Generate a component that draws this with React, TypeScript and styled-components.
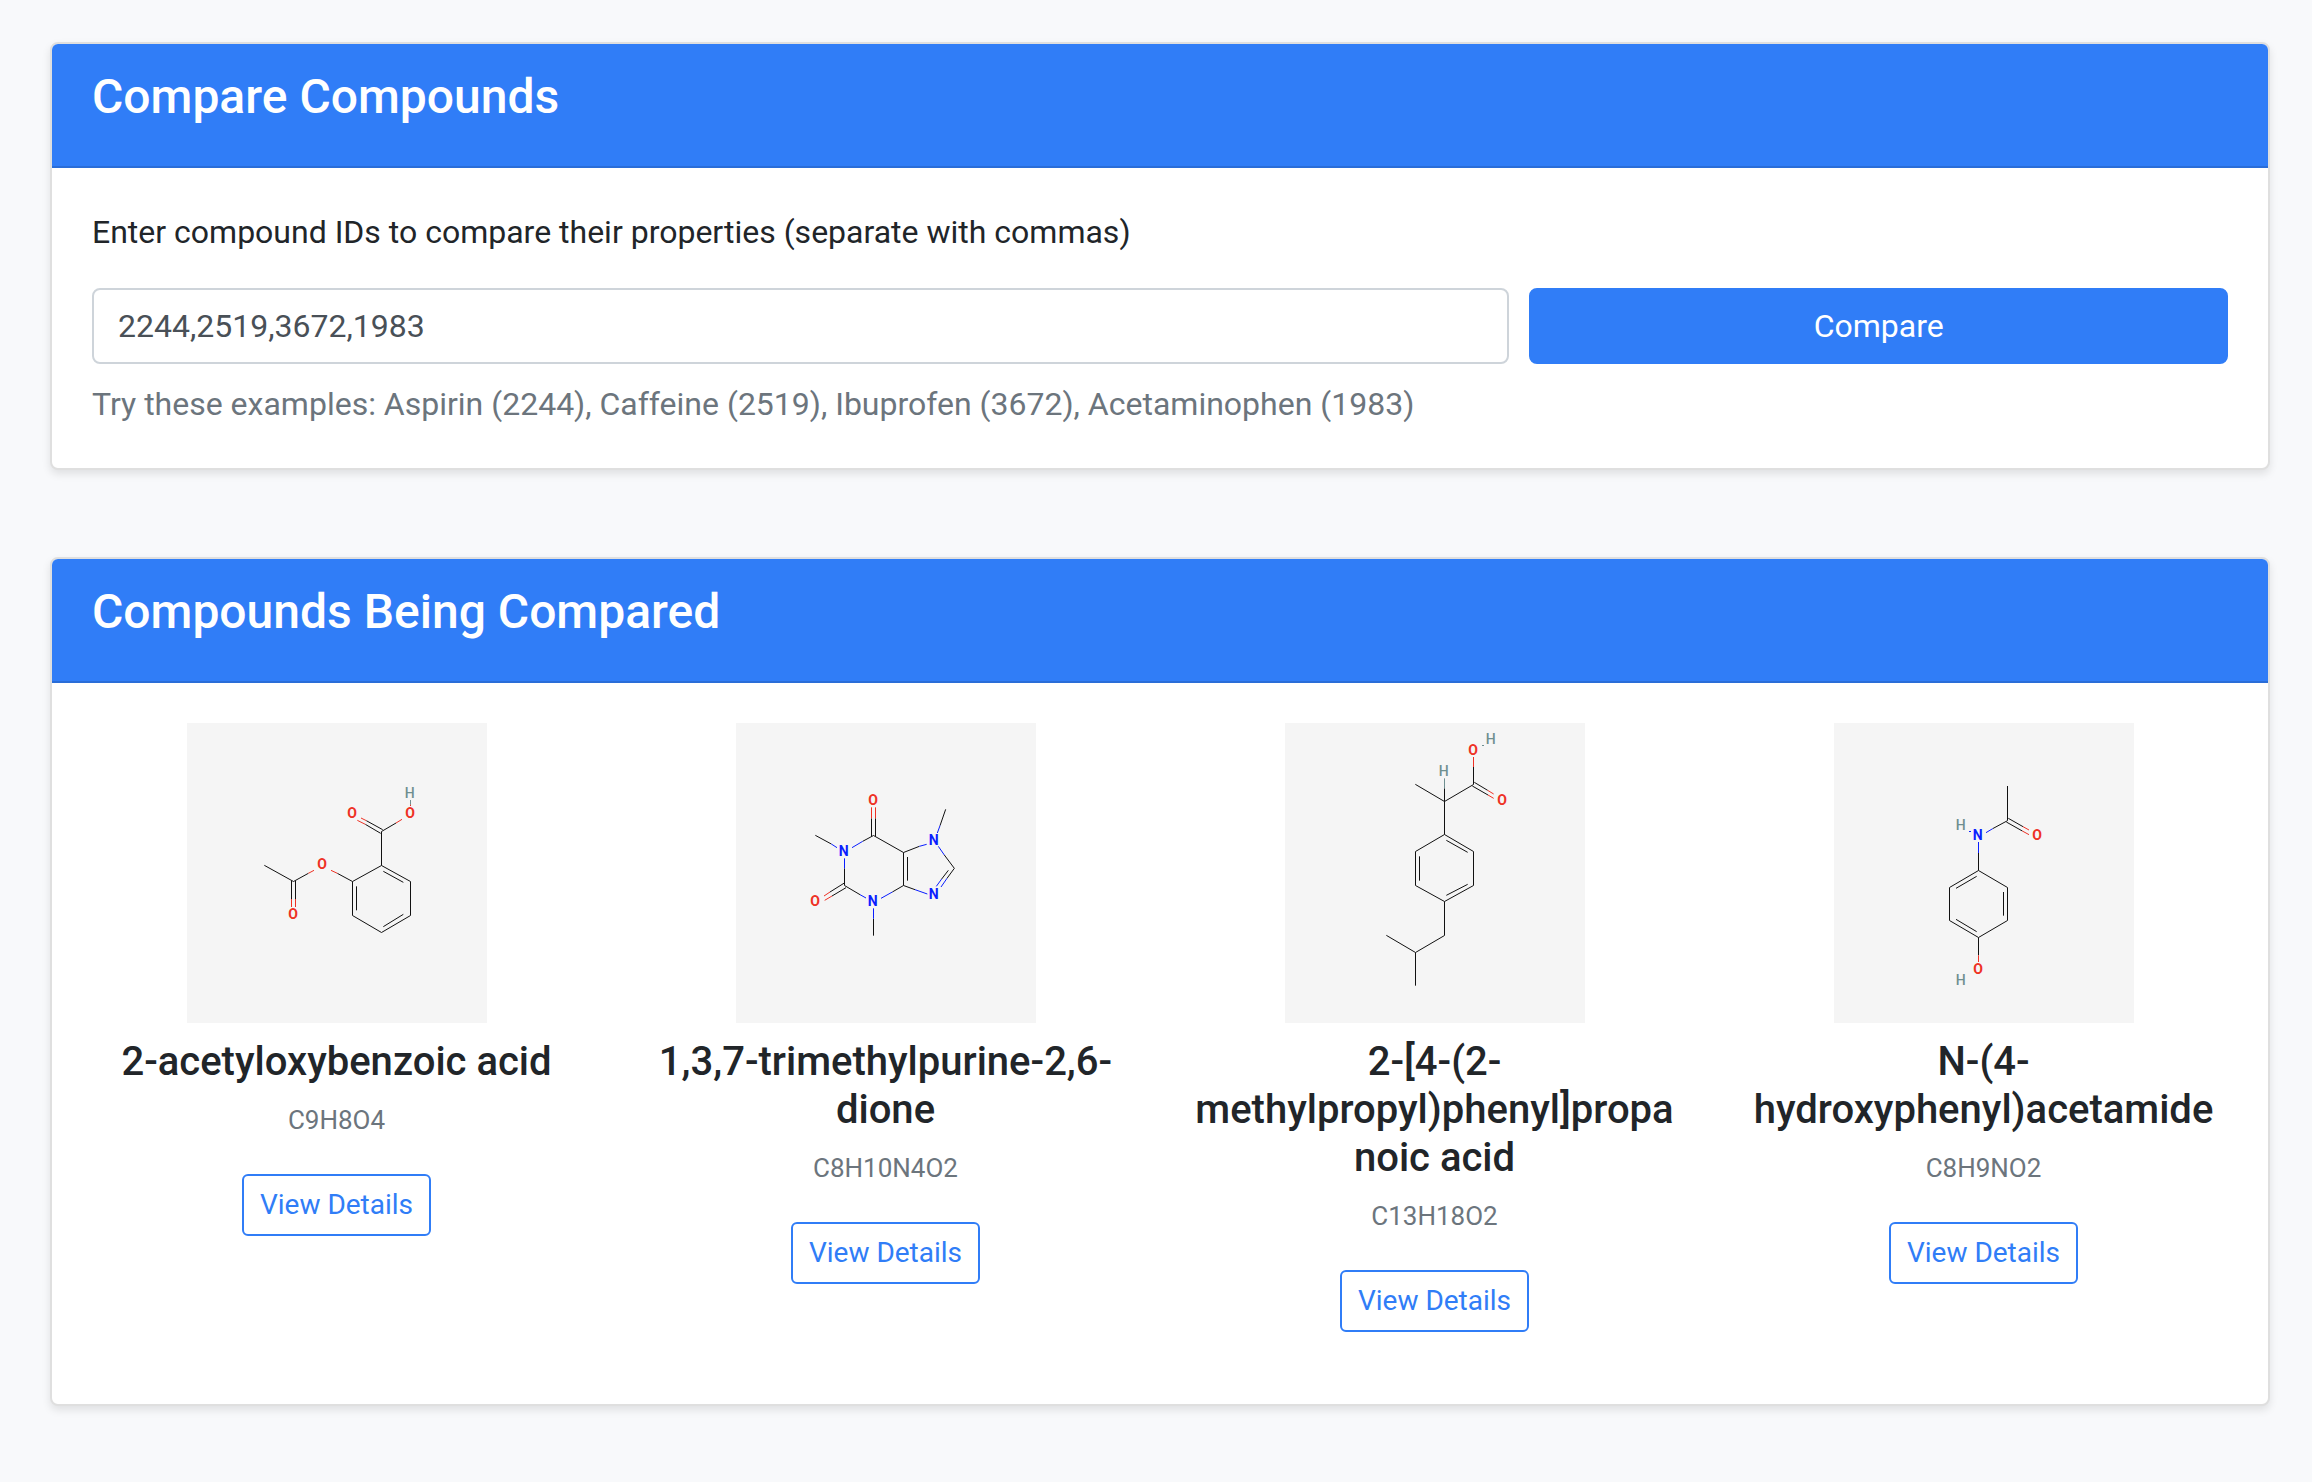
import React, { useState } from "react";
import styled, { createGlobalStyle } from "styled-components";

const color = {
  page: "#f8f9fb",
  primary: "#307df7",
  text: "#212529",
  muted: "#6c757d",
  input: "#495057",
  inputBorder: "#ced4da",
  cardBorder: "#dfdfdf",
  depiction: "#f5f5f5",
};

const GlobalStyle = createGlobalStyle`
  *, *::before, *::after { box-sizing: border-box; }
  body {
    margin: 0;
    background: ${color.page};
    color: ${color.text};
    font-family: Roboto, "Liberation Sans", sans-serif;
    font-size: 32px;
    line-height: 48px;
  }
`;

const Page = styled.main`
  display: flex;
  flex-direction: column;
  gap: 87px;
  padding: 42px 42px 76px 50px;
`;

const Card = styled.section`
  background: #fff;
  border: 2px solid ${color.cardBorder};
  border-radius: 8px;
  box-shadow: 0 4px 8px rgba(0, 0, 0, 0.1);
`;

const CardHeader = styled.header`
  padding: 24px 40px 40px;
  background: ${color.primary};
  border-bottom: 2px solid rgba(0, 0, 0, 0.125);
  border-radius: 6px 6px 0 0;
`;

const CardTitle = styled.h2`
  margin: 0;
  color: #fff;
  font-size: 48px;
  font-weight: 500;
  line-height: 58px;
`;

const CardBody = styled.div`
  padding: 40px;
`;

const FieldLabel = styled.label`
  display: block;
  margin-bottom: 32px;
`;

const FormRow = styled.div`
  display: grid;
  grid-template-columns: repeat(12, minmax(0, 1fr));
  column-gap: 20px;
`;

const IdInput = styled.input`
  grid-column: span 8;
  height: 76px;
  padding: 12px 24px;
  border: 2px solid ${color.inputBorder};
  border-radius: 8px;
  background: #fff;
  color: ${color.input};
  font: inherit;
`;

const CompareButton = styled.button`
  grid-column: span 4;
  height: 76px;
  padding: 12px 24px;
  border: 2px solid ${color.primary};
  border-radius: 8px;
  background: ${color.primary};
  color: #fff;
  font: inherit;
  cursor: pointer;
`;

const HelpText = styled.p`
  margin: 16px 0 0;
  color: ${color.muted};
`;

const CompoundGrid = styled.div`
  display: grid;
  grid-template-columns: repeat(4, minmax(0, 1fr));
  column-gap: 60px;
`;

const Compound = styled.article`
  display: flex;
  flex-direction: column;
  align-items: center;
  padding-bottom: 32px;
  text-align: center;
`;

const Depiction = styled.svg`
  width: 300px;
  height: 300px;
  background: ${color.depiction};
`;

const AtomLabel = styled.text<{ $light?: boolean }>`
  font-family: Roboto, sans-serif;
  font-size: 42px;
  font-weight: ${(p) => (p.$light ? 500 : 700)};
  text-anchor: middle;
`;

const CompoundName = styled.h3`
  align-self: stretch;
  margin: 15px 0 8px;
  font-size: 40px;
  font-weight: 500;
  line-height: 48px;
  overflow-wrap: break-word;
`;

const FormulaLine = styled.p`
  height: 48px;
  margin: 0 0 32px;
`;

const Formula = styled.small`
  color: ${color.muted};
  font-size: 26px;
`;

const DetailsLink = styled.a`
  padding: 8px 16px;
  border: 2px solid ${color.primary};
  border-radius: 6px;
  color: ${color.primary};
  font-size: 28px;
  line-height: 42px;
  text-decoration: none;
`;

type Element = "C" | "O" | "N" | "H";

const elementColor: Record<Element, string> = {
  C: "#111111",
  O: "#ee3124",
  N: "#0a1eff",
  H: "#6f8f90",
};

interface CompoundData {
  id: number;
  name: string;
  formula: string;
  viewBox: string;
  bonds: [Element, string][];
  atoms: [Element, number, number][];
}

// Bond halves are grouped by the element whose colour they take.
const compounds: CompoundData[] = [
  {
    id: 2244,
    name: "2-acetyloxybenzoic acid",
    formula: "C9H8O4",
    viewBox: "21 24 900 900",
    bonds: [
      [
        "C",
        "M604.5 451.5L691.5 499.5V601.5L604.5 652.5L517.5 601.5V499.5Z M610 469L670 502 M529.5 514V586 M610 635L670 598 M604.5 451.5V349.5L648 324 M608 344L559 317 M602 355L556 328 M517.5 499.5L472 475 M253 451L340.5 499.5L385 475 M334.5 498V552 M346.5 498V552",
      ],
      [
        "O",
        "M648 324L666 313 M559 317L543 309 M556 328L532 316 M472 475L453 466 M385 475L402 466 M334.5 552V576 M346.5 552V576 M691.5 268V273",
      ],
      ["H", "M691.5 255V269"],
    ],
    atoms: [
      ["O", 516, 294],
      ["O", 690, 294],
      ["H", 689, 235],
      ["O", 426, 447],
      ["O", 339, 597],
    ],
  },
  {
    id: 2519,
    name: "1,3,7-trimethylpurine-2,6-dione",
    formula: "C8H10N4O2",
    viewBox: "18 24 900 900",
    bonds: [
      [
        "C",
        "M398 379L430.5 361.5L520.5 412.5V511.5L487 531 M532.5 426V497 M424.5 310V364 M436.5 310V364 M256 361L304 387 M343.5 460V511.5L390 539 M343 504L300 531 M348 518L306 543 M430.5 611V662 M520.5 412.5L568 394 M520.5 511.5L555 524 M630 332L647 283 M643 420L673 460L651 490 M655 466L635 492",
      ],
      ["O", "M424.5 277V310 M436.5 277V310 M300 531L282 543 M306 543L284 556"],
      [
        "N",
        "M398 379L366 398 M304 387L321 398 M343.5 430V460 M390 539L408 549 M487 531L453 550 M430.5 580V611 M568 394L590 388 M555 524L592 537 M630 332L622 354 M643 420L625 394 M651 490L633 516 M635 492L619 514",
      ],
    ],
    atoms: [
      ["O", 429, 255],
      ["N", 341, 409],
      ["N", 428, 559],
      ["N", 611, 376],
      ["N", 611, 538],
      ["O", 255, 558],
    ],
  },
  {
    id: 3672,
    name: "2-[4-(2-methylpropyl)phenyl]propanoic acid",
    formula: "C13H18O2",
    viewBox: "15 24 900 900",
    bonds: [
      [
        "C",
        "M493.5 358.5L580.5 409.5V511.5L493.5 559.5L406.5 511.5V409.5Z M499 376L563 412 M418.5 424V497 M499 541L563 508 M493.5 358.5V220 M406 208L493.5 259.5L580.5 208.5V156 M583 202L623 226 M577 213L624 240 M493.5 559.5V661.5L406.5 712.5V812 M406.5 712.5L319 661",
      ],
      ["O", "M580.5 156V126 M623 226L641 237 M624 240L641 250"],
      ["H", "M493.5 220V190 M606 91.5H612"],
    ],
    atoms: [
      ["H", 491, 168],
      ["O", 579, 105],
      ["H", 632, 73],
      ["O", 666, 255],
    ],
  },
  {
    id: 1983,
    name: "N-(4-hydroxyphenyl)acetamide",
    formula: "C8H9NO2",
    viewBox: "12 24 900 900",
    bonds: [
      [
        "C",
        "M532.5 213V317L488 341 M535 310L579 335 M529 321L577 348 M445.5 414V466.5L532.5 517.5V616.5L445.5 667.5L358.5 616.5V517.5L445.5 466.5 M440 484L378 520 M520.5 531V602 M440 650L378 613 M445.5 667.5V721",
      ],
      ["O", "M579 335L597 345 M577 348L597 359 M445.5 721V741"],
      ["N", "M488 341L468 353 M445.5 381V414 M417 349.5H423"],
    ],
    atoms: [
      ["H", 392, 330],
      ["N", 443, 360],
      ["O", 621, 360],
      ["O", 444, 762],
      ["H", 392, 795],
    ],
  },
];

function Structure({ compound }: { compound: CompoundData }) {
  return (
    <Depiction viewBox={compound.viewBox} role="img" aria-label={compound.name}>
      {compound.bonds.map(([element, d]) => (
        <path key={element} d={d} fill="none" stroke={elementColor[element]} strokeWidth={3} />
      ))}
      {compound.atoms.map(([element, x, y]) => (
        <AtomLabel
          key={`${x}-${y}`}
          x={x}
          y={y + 15}
          fill={elementColor[element]}
          $light={element === "H"}
        >
          {element}
        </AtomLabel>
      ))}
    </Depiction>
  );
}

export default function App() {
  const [ids, setIds] = useState("2244,2519,3672,1983");

  return (
    <>
      <GlobalStyle />
      <Page>
        <Card>
          <CardHeader>
            <CardTitle>Compare Compounds</CardTitle>
          </CardHeader>
          <CardBody as="form" onSubmit={(e: React.FormEvent) => e.preventDefault()}>
            <FieldLabel htmlFor="compound-ids">
              Enter compound IDs to compare their properties (separate with commas)
            </FieldLabel>
            <FormRow>
              <IdInput
                id="compound-ids"
                type="text"
                value={ids}
                onChange={(e) => setIds(e.target.value)}
              />
              <CompareButton type="submit">Compare</CompareButton>
            </FormRow>
            <HelpText>
              Try these examples: Aspirin (2244), Caffeine (2519), Ibuprofen (3672), Acetaminophen
              (1983)
            </HelpText>
          </CardBody>
        </Card>

        <Card>
          <CardHeader>
            <CardTitle>Compounds Being Compared</CardTitle>
          </CardHeader>
          <CardBody>
            <CompoundGrid>
              {compounds.map((compound) => (
                <Compound key={compound.id}>
                  <Structure compound={compound} />
                  <CompoundName>{compound.name}</CompoundName>
                  <FormulaLine>
                    <Formula>{compound.formula}</Formula>
                  </FormulaLine>
                  <DetailsLink href={`#compound-${compound.id}`}>View Details</DetailsLink>
                </Compound>
              ))}
            </CompoundGrid>
          </CardBody>
        </Card>
      </Page>
    </>
  );
}
